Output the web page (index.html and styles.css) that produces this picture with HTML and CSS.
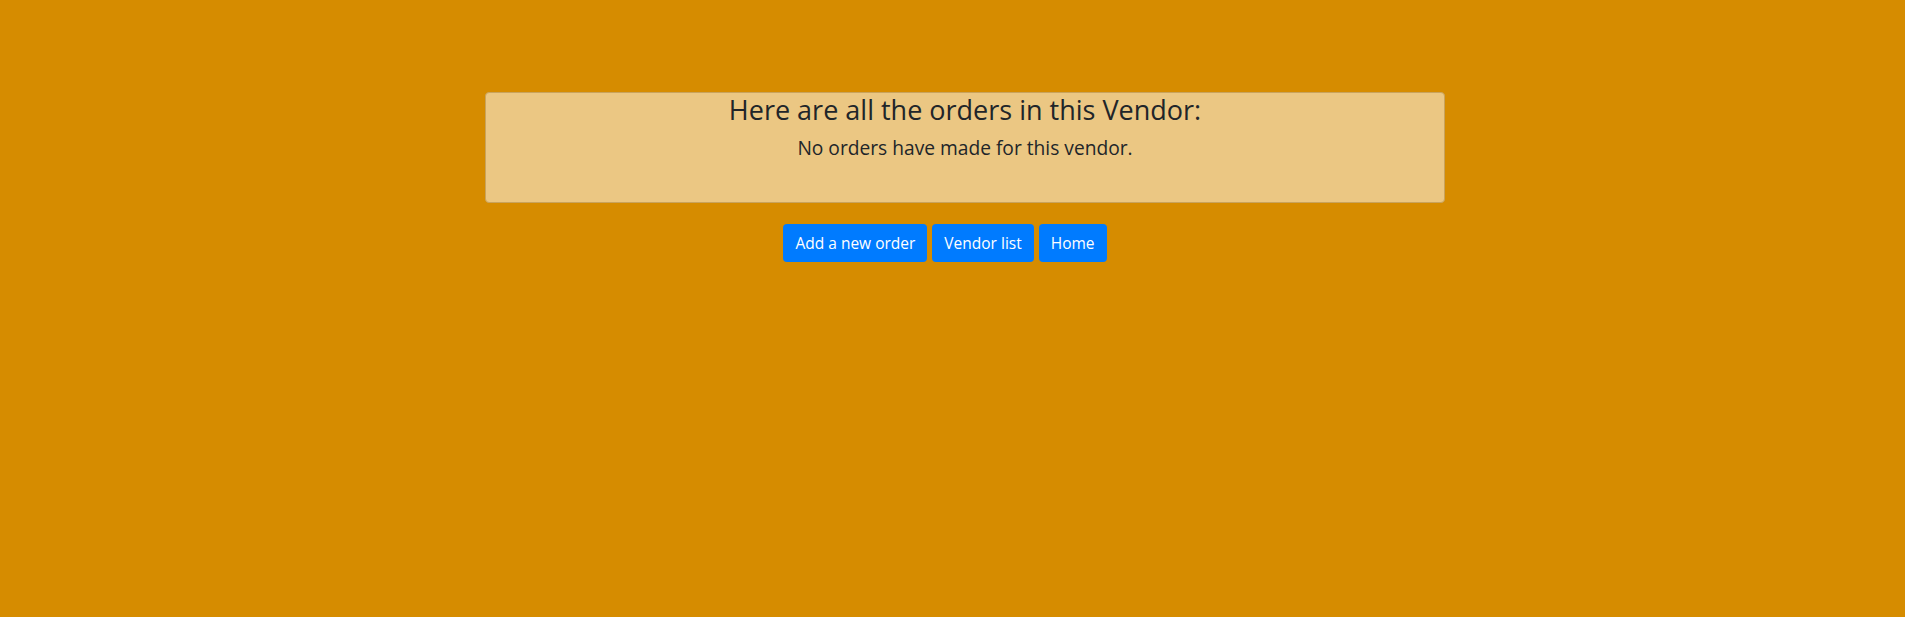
FILE: index.html
```html
<!DOCTYPE html>
<html lang="en">
<head>
<meta charset="utf-8">
<title>Vendor orders</title>
<link rel="stylesheet" href="styles.css">
</head>
<body>
<main class="page">
  <section class="panel">
    <h3 class="panel-title">Here are all the orders in this Vendor:</h3>
    <h5 class="panel-sub">No orders have made for this vendor.</h5>
  </section>
  <nav class="actions">
    <a class="btn" href="#">Add a new order</a>
    <a class="btn" href="#">Vendor list</a>
    <a class="btn" href="#">Home</a>
  </nav>
</main>
</body>
</html>
```

FILE: styles.css
```css
html, body {
  margin: 0;
  padding: 0;
  background: #d68c00;
  height: 100%;
}
body {
  font-family: "Open Sans", "Noto Sans", sans-serif;
  color: #212529;
}
.page {
  width: 1890px;
  padding-top: 92px;
  display: flex;
  flex-direction: column;
  align-items: center;
}
.panel {
  box-sizing: border-box;
  width: 960px;
  height: 111px;
  margin-left: 40px;
  background: #ebc783;
  border: 1px solid #c9a35c;
  border-radius: 4px;
  text-align: center;
  padding-top: 1px;
}
.panel-title {
  margin: 0;
  font-size: 27px;
  font-weight: 500;
  line-height: 1.2;
}
.panel-sub {
  margin: 10px 0 0;
  font-size: 19.2px;
  font-weight: 500;
  line-height: 1.2;
}
.actions {
  display: flex;
  gap: 5px;
  margin-top: 21px;
}
.btn {
  display: inline-block;
  height: 38px;
  box-sizing: border-box;
  padding: 0 12px;
  line-height: 38px;
  font-size: 15.5px;
  color: #fff;
  background: #007bff;
  border-radius: 4px;
  text-decoration: none;
}
```
